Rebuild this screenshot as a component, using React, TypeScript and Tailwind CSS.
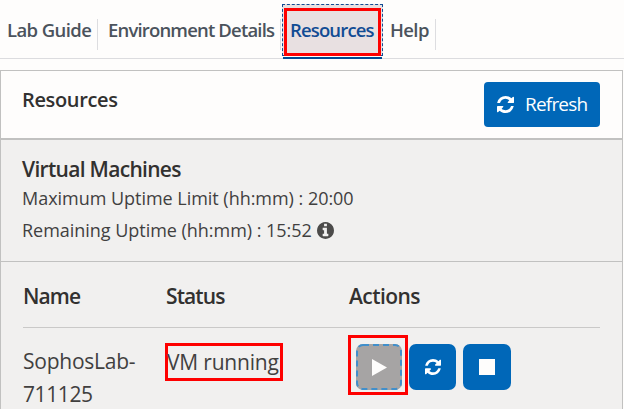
const refreshPath =
  'M1511 928q0 5-1 7-64 268-268 434.5t-478 166.5q-146 0-282.5-55t-243.5-157l-129 129q-19 19-45 19t-45-19-19-45v-448q0-26 19-45t45-19h448q26 0 45 19t19 45-19 45l-137 137q71 66 161 102t187 36q134 0 250-65t186-179q11-17 53-117 8-23 30-23h192q13 0 22.5 9.5t9.5 22.5zM1536 128v448q0 26-19 45t-45 19h-448q-26 0-45-19t-19-45 19-45l138-138q-148-137-349-137-134 0-250 65t-186 179q-11 17-53 117-8 23-30 23h-199q-13 0-22.5-9.5t-9.5-22.5v-7q65-268 270-434.5t480-166.5q146 0 284 55.5t245 156.5l130-129q19-19 45-19t45 19 19 45z';

function RefreshIcon({ className }: { className: string }) {
  return (
    <svg viewBox="0 0 1536 1536" className={className} fill="currentColor" aria-hidden="true">
      <path d={refreshPath} />
    </svg>
  );
}

function InfoIcon() {
  return (
    <svg viewBox="0 128 1536 1536" className="ml-[5px] size-[17px] text-[#4c4b4a]" fill="currentColor" aria-hidden="true">
      <path d="M1024 1376v-160q0-14-9-23t-23-9h-96v-512q0-14-9-23t-23-9h-320q-14 0-23 9t-9 23v160q0 14 9 23t23 9h96v320h-96q-14 0-23 9t-9 23v160q0 14 9 23t23 9h448q14 0 23-9t9-23zM896 480v-160q0-14-9-23t-23-9h-192q-14 0-23 9t-9 23v160q0 14 9 23t23 9h192q14 0 23-9t9-23zM1536 896q0 209-103 385.5t-279.5 279.5-385.5 103-385.5-103-279.5-279.5-103-385.5 103-385.5 279.5-279.5 385.5-103 385.5 103 279.5 279.5 103 385.5z" />
    </svg>
  );
}

function Tabs() {
  return (
    <nav className="flex h-[59px] items-start border-b border-[#dcdcdf] text-[18.5px] leading-[22px] font-semibold whitespace-nowrap text-[#4b535c]">
      <div className="mt-[19px] h-[31px] w-[98px] border-r border-[#dddde0] pl-[7px] tracking-[-0.6px]">Lab Guide</div>
      <div className="mt-[19px] h-[31px] w-[183px] border-r border-[#dddde0] pl-[10px] tracking-[-0.83px]">
        Environment Details
      </div>
      <div className="relative ml-px flex h-[59px] w-[101px] flex-col">
        <div className="mt-1 h-[52px] border border-dashed border-[#124c94] bg-[#e8e0e1] pt-[14px] pl-[7px] tracking-[-0.85px] text-[#124c94]">
          Resources
        </div>
        <div className="mx-px mt-px h-[2px] bg-[#004b93]" />
        <div className="absolute top-2 left-[2px] h-[48px] w-[97px] border-[3px] border-[#fe0000]" />
      </div>
      <div className="mt-[19px] h-[31px] w-[53px] border-r border-[#dddde0] pl-[7px] tracking-[-0.6px]">Help</div>
    </nav>
  );
}

export default function App() {
  return (
    <div className="h-[409px] w-[624px] overflow-hidden bg-[#fefdfc] font-['Open_Sans','Noto_Sans',sans-serif] text-[#323130]">
      <Tabs />
      <main className="mt-[11px] h-[350px] w-[623px] border-x border-t border-[#c1c1c0]">
        <header className="flex h-[69px] items-start justify-between border-b-2 border-[#c1c1c0] pr-[22px] pl-[21px]">
          <h1 className="mt-[15px] text-[20px] leading-[28px] font-semibold tracking-[-0.35px]">Resources</h1>
          <button className="mt-[11px] flex h-[45px] w-[116px] items-center rounded-[4px] bg-[#0067b8] pl-[13px] text-[19px] tracking-[-0.8px] text-white">
            <RefreshIcon className="mr-[11px] size-[17px]" />
            Refresh
          </button>
        </header>
        <section className="h-[122px] border-b border-[#c1c1c0] bg-[#f1f0ef] pl-[21px] whitespace-nowrap">
          <h2 className="pt-4 text-[21px] leading-[26px] font-semibold tracking-[-0.7px]">Virtual Machines</h2>
          <p className="text-[18px] leading-[32px] tracking-[-0.03px] text-[#41403f]">Maximum Uptime Limit (hh:mm) : 20:00</p>
          <p className="flex items-center text-[18px] leading-[32px] tracking-[-0.03px] text-[#41403f]">
            Remaining Uptime (hh:mm) : 15:52
            <InfoIcon />
          </p>
        </section>
        <section className="h-[160px] bg-[#f1f0ef] pr-[22px] pl-[22px] text-[21px]">
          <div className="flex h-[66px] border-b border-[#cac9c8] pt-[20px] leading-[28px] font-semibold">
            <div className="w-[143px] tracking-[-0.9px]">Name</div>
            <div className="w-[183px] tracking-[-0.9px]">Status</div>
            <div className="tracking-[-0.55px]">Actions</div>
          </div>
          <div className="flex text-[#41403f]">
            <div className="mt-[17px] w-[142px] leading-[33px] tracking-[-0.25px]">
              SophosLab-
              <br />
              <span className="tracking-[-0.4px]">711125</span>
            </div>
            <div className="mt-[15px] h-[38px] w-[118px] border-[3px] border-[#fe0000] leading-[32px] tracking-[-0.2px] whitespace-nowrap">
              <span className="-ml-px">VM running</span>
            </div>
            <div className="mt-[7px] ml-[65px] h-[60px] w-[60px] border-[3px] border-[#fe0000] pt-[6px] pl-[5px]">
              <button className="flex h-[46px] w-[46px] items-center justify-center rounded-[7px] bg-[#a6a4a4]">
                <svg viewBox="0 0 46 46" className="size-[46px]" fill="none" aria-hidden="true">
                  <rect x="1" y="1" width="44" height="44" rx="6" stroke="#418fcb" strokeWidth="2" strokeDasharray="6 4" />
                  <path d="M16 15v17l15-8.5z" fill="#fefdfc" />
                </svg>
              </button>
            </div>
            <button className="mt-[16px] ml-px flex h-[46px] w-[47px] items-center justify-center rounded-[7px] bg-[#0067b8] text-white">
              <RefreshIcon className="size-4" />
            </button>
            <button className="mt-[16px] ml-[7px] flex h-[46px] w-[48px] items-center justify-center rounded-[7px] bg-[#0067b8]">
              <span className="size-4 bg-[#fefdfc]" />
            </button>
          </div>
        </section>
      </main>
    </div>
  );
}
